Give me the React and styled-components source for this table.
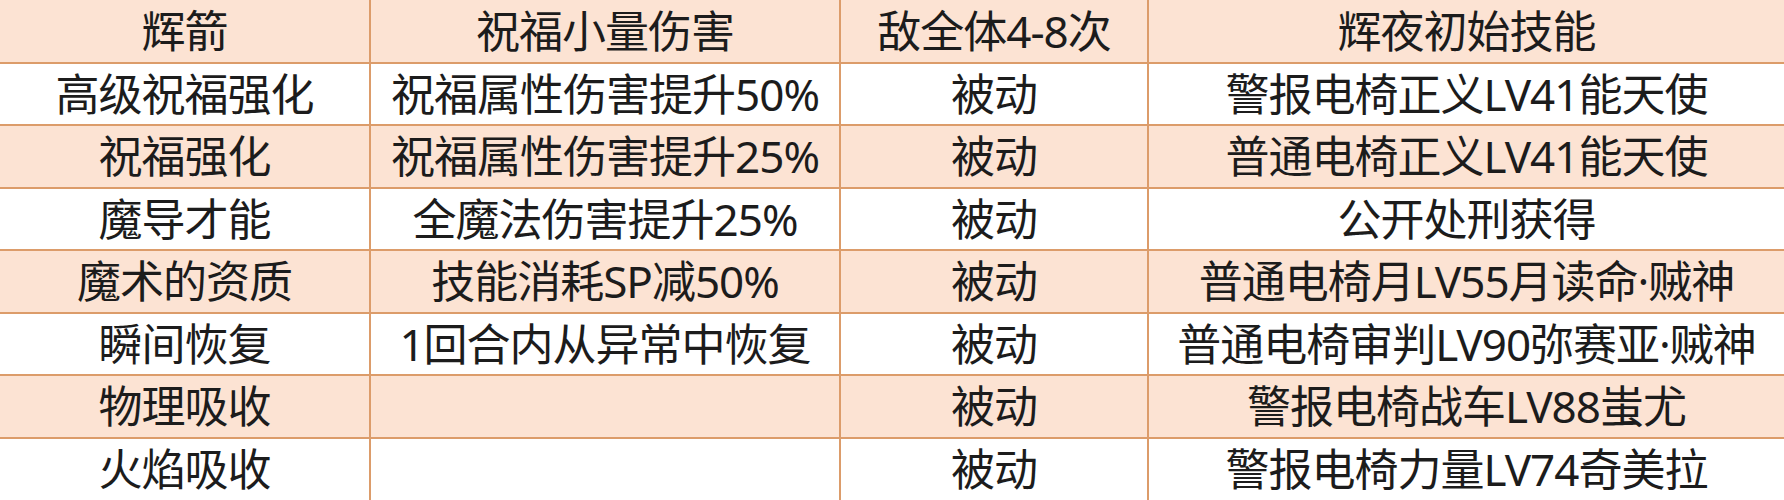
import styled, { createGlobalStyle } from 'styled-components'

const GlobalStyle = createGlobalStyle`
  html, body {
    margin: 0;
    padding: 0;
    background: #ffffff;
  }
`

const Table = styled.table`
  width: 1784px;
  height: 500px;
  border-collapse: collapse;
  table-layout: fixed;
  font-family: "Noto Sans", "Noto Sans CJK SC", sans-serif;
  color: #1c1c1c;
`

const Row = styled.tr`
  height: 62.5px;
  background-color: ${({ $shaded }) => ($shaded ? '#fce3d3' : '#ffffff')};
`

const Cell = styled.td`
  padding: 0;
  text-align: center;
  vertical-align: middle;
  font-size: 44px;
  letter-spacing: -1px;
  line-height: 1;
  white-space: nowrap;
  border-top: 2px solid #dc9c6a;
  border-left: 2px solid #dc9c6a;

  &:first-child {
    border-left: none;
  }

  tr:first-child > & {
    border-top: none;
  }
`

const columns = ['370px', '470px', '308px', 'auto']

const rows = [
  ['辉箭', '祝福小量伤害', '敌全体4-8次', '辉夜初始技能'],
  ['高级祝福强化', '祝福属性伤害提升50%', '被动', '警报电椅正义LV41能天使'],
  ['祝福强化', '祝福属性伤害提升25%', '被动', '普通电椅正义LV41能天使'],
  ['魔导才能', '全魔法伤害提升25%', '被动', '公开处刑获得'],
  ['魔术的资质', '技能消耗SP减50%', '被动', '普通电椅月LV55月读命·贼神'],
  ['瞬间恢复', '1回合内从异常中恢复', '被动', '普通电椅审判LV90弥赛亚·贼神'],
  ['物理吸收', '', '被动', '警报电椅战车LV88蚩尤'],
  ['火焰吸收', '', '被动', '警报电椅力量LV74奇美拉'],
]

const App = () => {
  return (
    <>
      <GlobalStyle />
      <Table>
        <colgroup>
          {columns.map((w, i) => (
            <col key={i} style={{ width: w }} />
          ))}
        </colgroup>
        <tbody>
          {rows.map((row, r) => (
            <Row key={r} $shaded={r % 2 === 0}>
              {row.map((text, c) => (
                <Cell key={c}>{text}</Cell>
              ))}
            </Row>
          ))}
        </tbody>
      </Table>
    </>
  )
}

export default App
